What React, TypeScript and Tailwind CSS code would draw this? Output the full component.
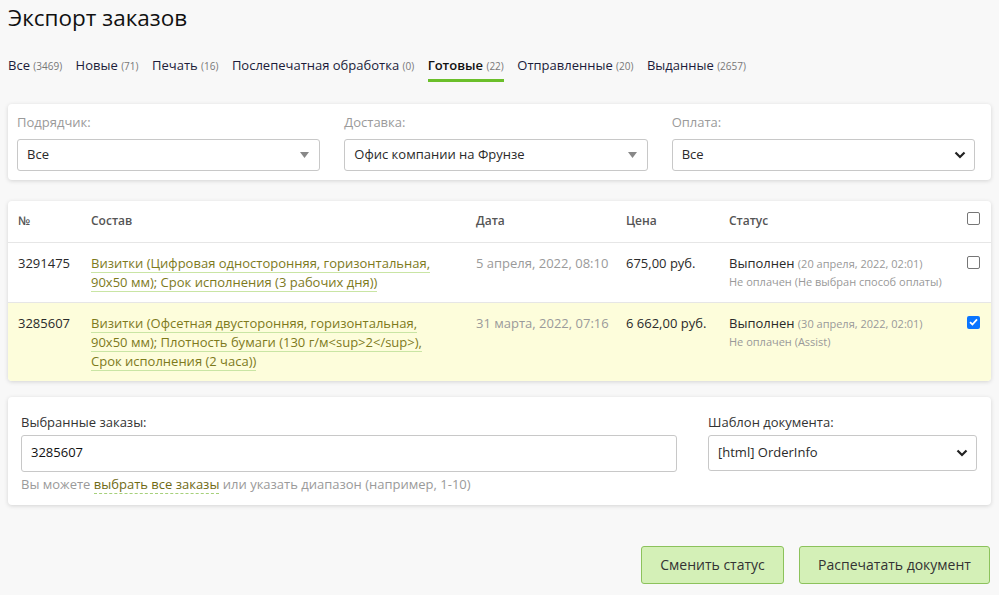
import React from "react";

type Tab = { name: string; count: number; active?: boolean };

const tabs: Tab[] = [
  { name: "Все", count: 3469 },
  { name: "Новые", count: 71 },
  { name: "Печать", count: 16 },
  { name: "Послепечатная обработка", count: 0 },
  { name: "Готовые", count: 22, active: true },
  { name: "Отправленные", count: 20 },
  { name: "Выданные", count: 2657 },
];

type Order = {
  id: string;
  lines: string[];
  date: string;
  price: string;
  statusDate: string;
  payment: string;
  checked: boolean;
};

const orders: Order[] = [
  {
    id: "3291475",
    lines: ["Визитки (Цифровая односторонняя, горизонтальная,", "90x50 мм); Срок исполнения (3 рабочих дня))"],
    date: "5 апреля, 2022, 08:10",
    price: "675,00 руб.",
    statusDate: "(20 апреля, 2022, 02:01)",
    payment: "Не оплачен (Не выбран способ оплаты)",
    checked: false,
  },
  {
    id: "3285607",
    lines: [
      "Визитки (Офсетная двусторонняя, горизонтальная,",
      "90x50 мм); Плотность бумаги (130 г/м<sup>2</sup>),",
      "Срок исполнения (2 часа))",
    ],
    date: "31 марта, 2022, 07:16",
    price: "6 662,00 руб.",
    statusDate: "(30 апреля, 2022, 02:01)",
    payment: "Не оплачен (Assist)",
    checked: true,
  },
];

function Triangle() {
  return (
    <svg width="9" height="6" viewBox="0 0 9 6" className="absolute right-[10px] top-[12px]">
      <path d="M0 0 L9 0 L4.5 6 Z" fill="#888" />
    </svg>
  );
}

function Chevron() {
  return (
    <svg width="12" height="8" viewBox="0 0 12 8" className="absolute right-[8px] top-1/2 -translate-y-1/2">
      <path d="M1.5 1.5 L6 6 L10.5 1.5" fill="none" stroke="#222" strokeWidth="2.2" />
    </svg>
  );
}

function SelectBox({ value, kind, h = "h-[32px]" }: { value: string; kind: "tri" | "chev"; h?: string }) {
  return (
    <div className={`relative ${h} rounded-[3px] border border-[#c8c8c8] bg-white flex items-center pl-[9px] text-[13px] text-[#2a2a2a]`}>
      {value}
      {kind === "tri" ? <Triangle /> : <Chevron />}
    </div>
  );
}

function Checkbox({ checked }: { checked: boolean }) {
  if (checked)
    return (
      <span className="flex w-[13px] h-[13px] rounded-[2px] bg-[#0a75ff] items-center justify-center">
        <svg width="9" height="8" viewBox="0 0 9 8">
          <path d="M1 4.2 L3.4 6.5 L8 1.3" fill="none" stroke="#fff" strokeWidth="1.8" />
        </svg>
      </span>
    );
  return <span className="block w-[13px] h-[13px] rounded-[2px] border border-[#767676] bg-white" />;
}

export default function App() {
  return (
    <div className="min-h-screen bg-[#f8f8f8] text-[#2a2a2a]" style={{ fontFamily: '"Open Sans", "Noto Sans", sans-serif' }}>
      <div className="w-[999px] h-[595px] overflow-hidden px-[8px]">
        <h1 className="text-[22.5px] leading-[28px] pt-[4px] font-normal text-[#111]">Экспорт заказов</h1>

        <div className="flex items-start gap-[13.5px] mt-[24px] h-[41px]">
          {tabs.map((t) => (
            <div key={t.name} className="flex flex-col">
              <div className={`text-[13px] leading-[18px] whitespace-nowrap ${t.active ? "font-semibold text-[#111]" : "text-[#1c1c3a]"}`}>
                {t.name} <span className="text-[10px] font-normal text-[#777]">({t.count})</span>
              </div>
              {t.active && <div className="h-[3px] bg-[#6bbf2a] mt-[4px]" />}
            </div>
          ))}
        </div>

        <div className="mt-[7px] bg-white rounded-[4px] shadow-[0_1px_4px_rgba(0,0,0,0.15)] pl-[9px] pr-[16px] pt-[9px] pb-[9px] grid grid-cols-3 gap-x-[24px]">
          {[
            { label: "Подрядчик:", value: "Все", kind: "tri" as const },
            { label: "Доставка:", value: "Офис компании на Фрунзе", kind: "tri" as const },
            { label: "Оплата:", value: "Все", kind: "chev" as const },
          ].map((f) => (
            <div key={f.label}>
              <div className="text-[13px] leading-[18px] text-[#9a9a9a] mb-[8px]">{f.label}</div>
              <SelectBox value={f.value} kind={f.kind} />
            </div>
          ))}
        </div>

        <div className="mt-[21px] bg-white rounded-[4px] shadow-[0_1px_4px_rgba(0,0,0,0.15)] overflow-hidden">
          <table className="w-full border-collapse text-left">
            <colgroup>
              <col className="w-[73px]" />
              <col className="w-[385px]" />
              <col className="w-[150px]" />
              <col className="w-[103px]" />
              <col className="w-[236px]" />
              <col />
            </colgroup>
            <thead>
              <tr className="h-[41px] border-b border-[#e6e6e6] text-[12px] text-[#555]">
                <th className="pl-[10px] font-semibold">№</th>
                <th className="pl-[10px] font-semibold">Состав</th>
                <th className="pl-[10px] font-semibold">Дата</th>
                <th className="pl-[10px] font-semibold">Цена</th>
                <th className="pl-[10px] font-semibold">Статус</th>
                <th className="pr-[11px] pb-[6px]">
                  <div className="flex justify-end"><Checkbox checked={false} /></div>
                </th>
              </tr>
            </thead>
            <tbody>
              {orders.map((o, i) => (
                <tr key={o.id} className={`align-top ${i === 0 ? "border-b border-[#e6e6e6]" : ""} ${o.checked ? "bg-[#fdfddb]" : ""}`}>
                  <td className="pl-[10px] pt-[11px] pb-[10px] text-[13px] leading-[19px]">{o.id}</td>
                  <td className="pl-[10px] pt-[11px] pb-[10px] text-[13px] leading-[19px] text-[#7d7a1c]">
                    {o.lines.map((l) => (
                      <div key={l}>
                        <span className="border-b border-[#c9e5a4]">{l}</span>
                      </div>
                    ))}
                  </td>
                  <td className="pl-[10px] pt-[11px] text-[13px] leading-[19px] text-[#9a9a9a] whitespace-nowrap">{o.date}</td>
                  <td className="pl-[10px] pt-[11px] text-[13px] leading-[19px] whitespace-nowrap">{o.price}</td>
                  <td className="pl-[10px] pt-[11px] whitespace-nowrap">
                    <div className="text-[13px] leading-[19px]">
                      Выполнен <span className="text-[11px] text-[#999]">{o.statusDate}</span>
                    </div>
                    <div className="text-[11px] leading-[18px] text-[#999]">{o.payment}</div>
                  </td>
                  <td className="pr-[11px] pt-[13px]">
                    <div className="flex justify-end"><Checkbox checked={o.checked} /></div>
                  </td>
                </tr>
              ))}
            </tbody>
          </table>
        </div>

        <div className="mt-[16px] bg-white rounded-[4px] shadow-[0_1px_4px_rgba(0,0,0,0.15)] pl-[13px] pr-[14px] pt-[16px] pb-[12px] flex gap-[31px]">
          <div className="flex-1">
            <div className="text-[13px] leading-[18px] text-[#333] mb-[4px]">Выбранные заказы:</div>
            <div className="h-[37px] rounded-[3px] border border-[#c8c8c8] flex items-center pl-[9px] text-[13px] text-[#111]">3285607</div>
            <div className="text-[13px] leading-[18px] mt-[3px] text-[#9a9a9a]">
              Вы можете{" "}
              <span className="text-[#6f6a14] border-b border-dashed border-[#a6d07a]">выбрать все заказы</span>{" "}
              или указать диапазон (например, 1-10)
            </div>
          </div>
          <div className="w-[269px]">
            <div className="text-[13px] leading-[18px] text-[#333] mb-[4px]">Шаблон документа:</div>
            <SelectBox value="[html] OrderInfo" kind="chev" h="h-[36px]" />
          </div>
        </div>

        <div className="flex justify-end gap-[15px] mt-[41px] pr-[1px]">
          <button className="h-[38px] w-[143px] rounded-[3px] border border-[#8cc25c] bg-[#d4f0b7] text-[14px] text-[#333]">Сменить статус</button>
          <button className="h-[38px] w-[191px] rounded-[3px] border border-[#8cc25c] bg-[#d4f0b7] text-[14px] text-[#333]">Распечатать документ</button>
        </div>
      </div>
    </div>
  );
}
